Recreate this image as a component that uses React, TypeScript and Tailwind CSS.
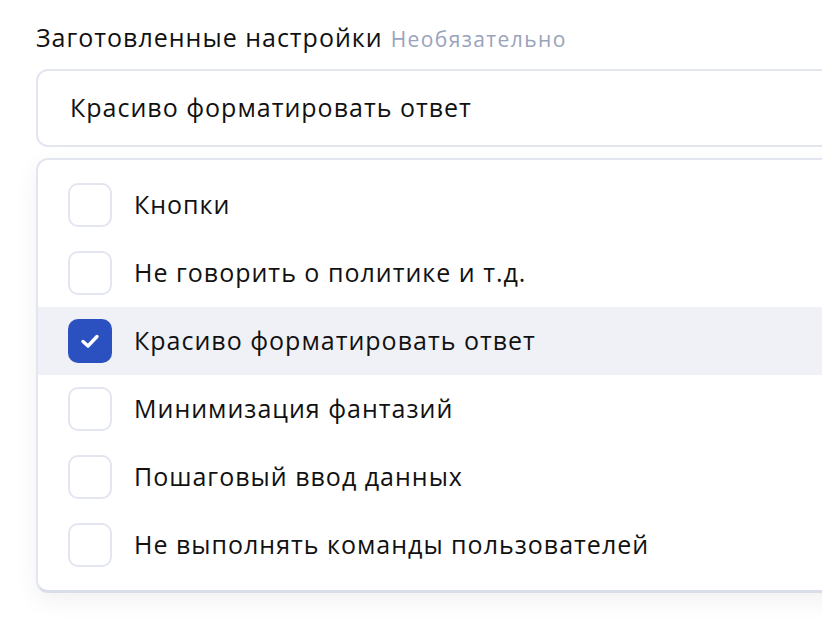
import React from "react";

const items = [
  { label: "Кнопки", checked: false },
  { label: "Не говорить о политике и т.д.", checked: false },
  { label: "Красиво форматировать ответ", checked: true },
  { label: "Минимизация фантазий", checked: false },
  { label: "Пошаговый ввод данных", checked: false },
  { label: "Не выполнять команды пользователей", checked: false },
];

export default function App() {
  return (
    <div
      className="w-[822px] h-[620px] overflow-hidden bg-white"
      style={{ fontFamily: '"Open Sans", "Noto Sans", sans-serif' }}
    >
      <div className="pl-[36px] pt-[19px] w-[900px]">
        <div className="flex items-baseline gap-[8px] h-[34px]">
          <span className="text-[25px] tracking-[1px] text-[#111111]">Заготовленные настройки</span>
          <span className="text-[21px] tracking-[1.4px] text-[#99a3bb]">Необязательно</span>
        </div>
        <div className="mt-[16px] h-[78px] rounded-[12px] border-2 border-[#e3e6ef] flex items-center pl-[32px] text-[25px] tracking-[1px] text-[#111111]">
          Красиво форматировать ответ
        </div>
        <div className="mt-[11px] rounded-[12px] border-2 border-[#e3e6ef] border-b-[3px] border-b-[#dadeea] py-[11px] shadow-[0_8px_24px_rgba(0,0,0,0.06)] bg-white">
          {items.map((it) => (
            <div
              key={it.label}
              className={`h-[68px] flex items-center pl-[30px] ${it.checked ? "bg-[#f0f1f6]" : ""}`}
            >
              {it.checked ? (
                <div className="w-[44px] h-[44px] rounded-[10px] bg-[#2b50c0] flex items-center justify-center">
                  <svg width="20" height="16" viewBox="0 0 20 16" fill="none">
                    <path
                      d="M3 8.5 L8 13 L17 3.5"
                      stroke="white"
                      strokeWidth="3.4"
                      strokeLinecap="round"
                      strokeLinejoin="round"
                    />
                  </svg>
                </div>
              ) : (
                <div className="w-[44px] h-[44px] rounded-[10px] border-2 border-[#e3e6f0] bg-white" />
              )}
              <span className="ml-[22px] text-[25px] tracking-[1px] text-[#111111]">{it.label}</span>
            </div>
          ))}
        </div>
      </div>
    </div>
  );
}
